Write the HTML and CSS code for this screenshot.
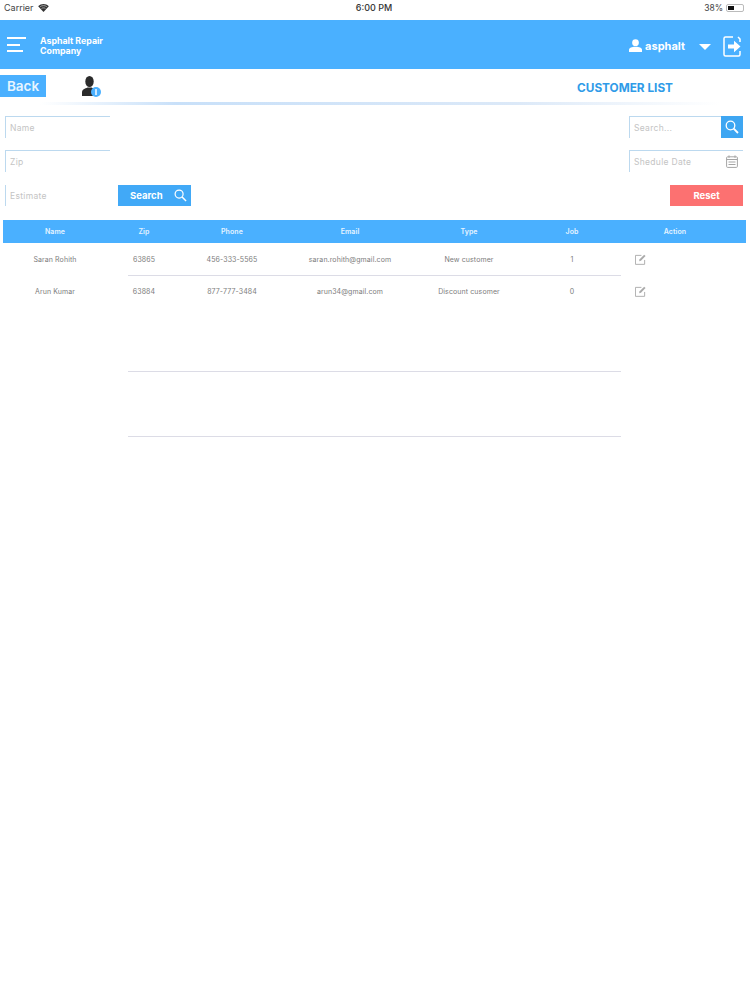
FILE: index.html
```html
<!DOCTYPE html>
<html lang="en">
<head>
  <meta charset="UTF-8">
  <title>Customer list</title>
  <link rel="stylesheet" href="styles.css">
</head>
<body>
  <div class="status">
    <div class="carrier">
      <span>Carrier</span>
      <svg class="wifi" viewBox="0 0 12 9" width="11" height="8"><path d="M6 9 0 2.6C3.4-.8 8.6-.8 12 2.6z" fill="#333"/><path d="M2.3 3C4.4 1.4 7.6 1.4 9.7 3" fill="none" stroke="#fff" stroke-width=".6"/><path d="M3.8 5C5 4.2 7 4.2 8.2 5" fill="none" stroke="#fff" stroke-width=".6"/></svg>
    </div>
    <div class="clock">6:00 PM</div>
    <div class="battery">
      <span>38%</span>
      <span class="batt-body"><span class="batt-fill"></span></span>
    </div>
  </div>

  <header class="topbar">
    <div class="burger"><i class="b1"></i><i class="b2"></i><i class="b3"></i></div>
    <div class="company">Asphalt Repair<br>Company</div>
    <div class="account">
      <svg viewBox="0 0 14 14" width="13" height="13"><circle cx="7" cy="4" r="3.6" fill="#fff"/><path d="M0 14V11.5C0 9.5 3 8.4 7 8.4s7 1.1 7 3.1V14z" fill="#fff"/></svg>
      <span>asphalt</span>
    </div>
    <div class="caret"></div>
    <svg class="logout" viewBox="0 0 18 21" width="18" height="21"><path d="M10 1H2.500A1.500 1.500 0 0 0 1 2.500v16A1.500 1.500 0 0 0 2.500 20H15.500A1.500 1.500 0 0 0 17 18.500V15M17 6V3L15 1" fill="none" stroke="#fff" stroke-width="1.500"/><path d="M5 8.500h6V4.800l6.500 5.700-6.500 5.700v-3.700H5z" fill="#fff"/></svg>
  </header>

  <div class="subbar">
    <div class="back">Back</div>
    <div class="person">
      <svg viewBox="0 0 15 20" width="15" height="20"><ellipse cx="7.500" cy="5.500" rx="4.200" ry="5.500" fill="#2b2b2b"/><path d="M0 20v-3.500C0 13.500 3 12.500 5.500 11.500h4c2.500 1 5.500 2 5.500 5V20z" fill="#2b2b2b"/></svg>
      <span class="badge"></span>
    </div>
    <div class="title">CUSTOMER LIST</div>
  </div>

  <section class="filters">
    <div class="filter-col">
      <div class="field">Name</div>
      <div class="field">Zip</div>
      <div class="filter-row">
        <div class="field field-plain">Estimate</div>
        <div class="btn btn-search">
          <span>Search</span>
          <svg viewBox="0 0 14 14" width="13" height="13"><circle cx="5.500" cy="5.500" r="4.300" fill="none" stroke="#fff" stroke-width="1.300"/><path d="m8.700 8.700 4.300 4.300" stroke="#fff" stroke-width="1.600"/></svg>
        </div>
      </div>
    </div>
    <div class="filter-col filter-right">
      <div class="field field-wide">
        <span>Search...</span>
        <span class="search-box">
          <svg viewBox="0 0 14 14" width="14" height="14"><circle cx="5.500" cy="5.500" r="4.300" fill="none" stroke="#fff" stroke-width="1.300"/><path d="m8.700 8.700 4.300 4.300" stroke="#fff" stroke-width="1.800"/></svg>
        </span>
      </div>
      <div class="field field-wide">
        <span>Shedule Date</span>
        <svg class="cal" viewBox="0 0 12 13" width="12" height="13"><rect x=".6" y="1.800" width="10.800" height="10.600" rx="1" fill="none" stroke="#a5a5a5"/><path d="M.6 4.500h10.800M3 .4v2.500M9 .4v2.500M2.500 7h7M2.500 9.500h7" stroke="#a5a5a5" fill="none"/></svg>
      </div>
      <div class="btn btn-reset">Reset</div>
    </div>
  </section>

  <section class="table">
    <div class="row row-head">
      <div>Name</div><div>Zip</div><div>Phone</div><div>Email</div><div>Type</div><div>Job</div><div class="cell-action">Action</div>
    </div>
    <div class="row row-line">
      <div>Saran Rohith</div><div>63865</div><div>456-333-5565</div><div>saran.rohith@gmail.com</div><div>New customer</div><div>1</div>
      <div class="cell-edit"><svg viewBox="0 0 12 12" width="11" height="11"><path d="M10.500 6.500v4.800h-10V1.500h6.500" fill="none" stroke="#aaa"/><path d="m4.500 7.800.5-2L10 .8l1.500 1.500-5 5z" fill="#aaa"/></svg></div>
    </div>
    <div class="row">
      <div>Arun Kumar</div><div>63884</div><div>877-777-3484</div><div>arun34@gmail.com</div><div>Discount cusomer</div><div>0</div>
      <div class="cell-edit"><svg viewBox="0 0 12 12" width="11" height="11"><path d="M10.500 6.500v4.800h-10V1.500h6.500" fill="none" stroke="#aaa"/><path d="m4.500 7.800.5-2L10 .8l1.500 1.500-5 5z" fill="#aaa"/></svg></div>
    </div>
    <div class="empty-row"></div>
    <div class="empty-row"></div>
  </section>
</body>
</html>
```

FILE: styles.css
```css
* {
  padding: 0;
  margin: 0;
  box-sizing: border-box;
}
body {
  background-color: #fff;
  font-family: Inter, "Liberation Sans", sans-serif;
  color: #333;
}

/* status bar */
.status {
  display: grid;
  grid-template-columns: 1fr auto 1fr;
  align-items: center;
  height: 20px;
  padding: 0 6px 5px 4px;
  font-size: 9px;
  color: #444;
}
.carrier {
  display: flex;
  align-items: center;
  gap: 4px;
}
.clock {
  font-weight: 500;
  color: #333;
}
.battery {
  display: flex;
  align-items: center;
  justify-content: flex-end;
  gap: 3px;
  font-size: 8.500px;
}
.batt-body {
  display: block;
  width: 18px;
  height: 8px;
  padding: 1px;
  border: 1px solid #bbb;
  border-radius: 2px;
}
.batt-fill {
  display: block;
  width: 6px;
  height: 100%;
  background-color: #111;
}

/* blue header */
.topbar {
  display: flex;
  align-items: center;
  height: 49px;
  padding: 0 9px 0 7px;
  background-color: #4ab0ff;
  color: #fff;
}
.burger {
  display: flex;
  flex-direction: column;
  gap: 4.500px;
  width: 19px;
}
.burger i {
  display: block;
  height: 2px;
  background-color: #fff;
}
.burger .b2 {
  width: 13px;
}
.burger .b3 {
  width: 16px;
}
.company {
  margin: 3px 0 0 14px;
  font-size: 8.800px;
  font-weight: 700;
  line-height: 10px;
}
.account {
  display: flex;
  align-items: center;
  gap: 3px;
  margin: 2px 0 0 auto;
  font-size: 11px;
  font-weight: 700;
}
.caret {
  width: 0;
  height: 0;
  margin: 4px 0 0 14px;
  border-left: 6px solid transparent;
  border-right: 6px solid transparent;
  border-top: 6px solid #fff;
}
.logout {
  margin: 3px 0 0 12px;
}

/* back + title row */
.subbar {
  position: relative;
  display: flex;
  align-items: flex-start;
  height: 36px;
  padding-top: 6px;
}
.subbar::after {
  content: "";
  position: absolute;
  left: 40px;
  right: 30px;
  bottom: 0;
  height: 3px;
  background: linear-gradient(to right, #fff, #c8e0f9 20%, #dce9f8 70%, #fff);
}
.back {
  width: 46px;
  height: 22px;
  background-color: #4ab0ff;
  color: #e8f5ff;
  font-size: 13.500px;
  font-weight: 600;
  line-height: 22px;
  text-align: center;
}
.person {
  position: relative;
  width: 15px;
  height: 20px;
  margin: 1px 0 0 36px;
}
.badge {
  position: absolute;
  left: 9px;
  top: 11px;
  width: 10px;
  height: 10px;
  border-radius: 50%;
  background-color: #4ab0ff;
}
.badge::after {
  content: "";
  position: absolute;
  left: 4px;
  top: 2px;
  width: 2px;
  height: 6px;
  background-color: #cde8ff;
}
.title {
  margin: 6px 77px 0 auto;
  color: #2f9be8;
  font-size: 11.800px;
  font-weight: 700;
}

/* filters */
.filters {
  display: flex;
  justify-content: space-between;
  padding: 11px 7px 0 5px;
}
.filter-col {
  display: flex;
  flex-direction: column;
  gap: 12px;
}
.filter-right {
  align-items: flex-end;
}
.filter-row {
  display: flex;
  gap: 8px;
  margin-top: 1px;
}
.field {
  display: flex;
  align-items: center;
  width: 105px;
  height: 22px;
  padding-left: 4px;
  border-top: 1px solid #bcd9ef;
  border-left: 1px solid #bcd9ef;
  color: #c4c4c4;
  font-size: 8.500px;
  letter-spacing: 0.3px;
}
.field-plain {
  height: 21px;
  border-top: 0;
}
.field-wide {
  justify-content: space-between;
  width: 114px;
}
.search-box {
  display: flex;
  align-items: center;
  justify-content: center;
  width: 22px;
  height: 22px;
  margin-top: -1px;
  background-color: #3ea6f2;
}
.cal {
  margin-right: 5px;
}
.btn {
  display: flex;
  align-items: center;
  height: 21px;
  color: #fff;
  font-size: 9.500px;
  font-weight: 700;
}
.btn-search {
  justify-content: space-between;
  width: 73px;
  padding: 0 4px 0 12px;
  background-color: #41a9f7;
}
.btn-reset {
  justify-content: center;
  width: 73px;
  margin-top: 1px;
  background-color: #fc7171;
}

/* table */
.table {
  margin: 14px 4px 0 3px;
}
.row {
  display: grid;
  grid-template-columns: 104px 74px 102px 134px 104px 102px 123px;
  align-items: center;
  height: 32px;
  color: #7c7c7c;
  font-size: 7px;
  letter-spacing: 0.1px;
  text-align: center;
}
.row-head {
  height: 23px;
  background-color: #4ab0ff;
  color: #e6f4ff;
  font-weight: 600;
}
.cell-action {
  padding-right: 19px;
}
.cell-edit {
  display: flex;
  padding-left: 12px;
}
.row-line {
  position: relative;
}
.row-line::after,
.empty-row::after {
  content: "";
  position: absolute;
  left: 125px;
  width: 493px;
  bottom: 0;
  height: 1px;
  background-color: #dcdce6;
}
.row-line::after {
  bottom: -1px;
}
.empty-row {
  position: relative;
  height: 65px;
}
```
